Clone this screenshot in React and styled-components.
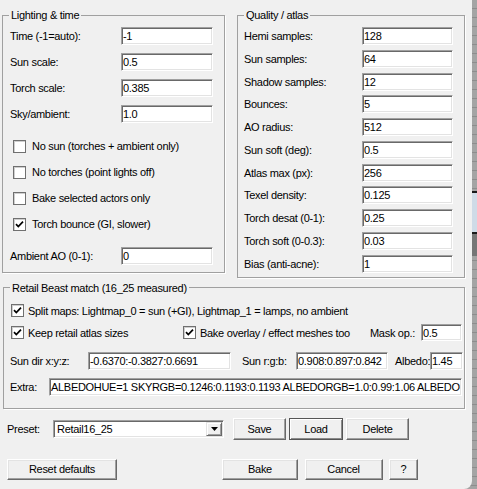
import React from 'react';
import styled, { createGlobalStyle, css } from 'styled-components';

const GlobalStyle = createGlobalStyle`
  html, body {
    margin: 0;
    padding: 0;
  }
  body {
    height: 489px;
    overflow: hidden;
    font-family: "Liberation Sans", Arial, sans-serif;
    font-size: 11px;
    letter-spacing: -0.3px;
    color: #000;
    background:
      linear-gradient(to bottom,
        transparent 191px, #1a1a1a 191px, #1a1a1a 193px,
        #cfdbe7 193px, #cfdbe7 232px, #1a1a1a 232px, #1a1a1a 234px,
        #767676 234px, #767676 256px, transparent 256px),
      repeating-linear-gradient(to bottom, #a4a4a4 0 8px, #8d8d8d 8px 9px);
  }
`;

const Dialog = styled.div`
  width: 472px;
  height: 489px;
  box-sizing: border-box;
  padding: 8px 0 0 2px;
  background: #f0f0f0;
  border-bottom-right-radius: 8px;
`;

const TopRow = styled.div`
  display: flex;
  align-items: flex-start;
  gap: 12px;
`;

const Group = styled.fieldset`
  margin: ${p => p.$margin || 0};
  padding: 0;
  min-width: 0;
  box-sizing: border-box;
  width: ${p => p.$width}px;
  border: 1px solid #a0a0a0;
  box-shadow: 1px 1px 0 #fff;
`;

const Legend = styled.legend`
  margin-left: 6px;
  padding: 0 2px;
  height: 14px;
  line-height: 14px;
`;

const GroupBody = styled.div`
  display: flex;
  flex-direction: column;
  gap: ${p => p.$gap}px;
  padding: ${p => p.$pad};
`;

const Field = styled.div`
  display: grid;
  grid-template-columns: ${p => p.$label}px auto;
  align-items: center;
  height: 18px;
  margin-top: ${p => p.$push || 0}px;
`;

const TextBox = styled.input`
  box-sizing: border-box;
  width: ${p => p.$w}px;
  height: ${p => p.$h || 18}px;
  margin: 0;
  padding: 0 1px;
  font: inherit;
  letter-spacing: inherit;
  color: #000;
  background: #fff;
  border: 1px solid;
  border-color: #a0a0a0 #fff #fff #a0a0a0;
  box-shadow: inset 1px 1px 0 #696969, inset -1px -1px 0 #e3e3e3;
  outline: none;
`;

const CheckRow = styled.label`
  display: flex;
  align-items: center;
  gap: ${p => p.$gap || 6}px;
  height: 18px;
  padding-left: ${p => p.$indent || 0}px;
  margin-top: ${p => p.$push || 0}px;
  width: ${p => (p.$w ? `${p.$w}px` : 'auto')};
  flex-shrink: 0;
  white-space: nowrap;
`;

const Box = styled.span`
  box-sizing: border-box;
  width: 13px;
  height: 13px;
  flex-shrink: 0;
  display: flex;
  align-items: center;
  justify-content: center;
  background: #fff;
  border: 1px solid #707070;
  box-shadow: inset 1px 1px 0 #cfcfcf;
`;

const Row = styled.div`
  display: flex;
  align-items: center;
  height: 18px;
  margin-top: ${p => p.$push || 0}px;
`;

const Caption = styled.span`
  width: ${p => p.$w}px;
  flex-shrink: 0;
  white-space: nowrap;
  margin-left: ${p => p.$lead || 0}px;
`;

const Combo = styled.div`
  box-sizing: border-box;
  width: 171px;
  height: 18px;
  display: flex;
  align-items: center;
  background: #fff;
  border: 1px solid;
  border-color: #a0a0a0 #fff #fff #a0a0a0;
  box-shadow: inset 1px 1px 0 #696969, inset -1px -1px 0 #e3e3e3;
  padding: 1px 1px 1px 2px;
`;

const ComboText = styled.span`
  flex: 1;
  padding-left: 1px;
`;

const ComboArrow = styled.span`
  box-sizing: border-box;
  width: 16px;
  height: 14px;
  display: flex;
  align-items: center;
  justify-content: center;
  background: #f0f0f0;
  border: 1px solid;
  border-color: #e3e3e3 #696969 #696969 #e3e3e3;
  box-shadow: inset 1px 1px 0 #fff, inset -1px -1px 0 #a0a0a0;
`;

const ButtonRow = styled.div`
  display: flex;
  align-items: center;
  padding-left: 5px;
  margin-top: ${p => p.$push}px;
  height: ${p => p.$h}px;
`;

const ButtonGroup = styled.div`
  display: flex;
  gap: ${p => p.$gap}px;
  margin-left: ${p => p.$offset}px;
`;

const Button = styled.button`
  box-sizing: border-box;
  width: ${p => p.$w}px;
  height: ${p => p.$h || 22}px;
  margin: 0;
  padding: 0;
  font: inherit;
  letter-spacing: inherit;
  color: #000;
  background: #f0f0f0;
  border: 1px solid;
  border-color: #fff #696969 #696969 #fff;
  box-shadow: inset -1px -1px 0 #a0a0a0, inset 1px 1px 0 #e3e3e3;
  ${p => p.$default && css`
    border-color: #555;
    box-shadow: inset 1px 1px 0 #fff, inset -1px -1px 0 #8a8a8a;
  `}
`;

function Check({ checked, children, ...rest }) {
  return (
    <CheckRow {...rest}>
      <Box>
        {checked && (
          <svg width="9" height="9" viewBox="0 0 9 9">
            <path d="M1 4.2 L3.3 6.6 L8 1.6" fill="none" stroke="#000" strokeWidth="1.7" />
          </svg>
        )}
      </Box>
      <span>{children}</span>
    </CheckRow>
  );
}

const lighting = [
  ['Time (-1=auto):', '-1'],
  ['Sun scale:', '0.5'],
  ['Torch scale:', '0.385'],
  ['Sky/ambient:', '1.0'],
];

const quality = [
  ['Hemi samples:', '128'],
  ['Sun samples:', '64'],
  ['Shadow samples:', '12'],
  ['Bounces:', '5'],
  ['AO radius:', '512'],
  ['Sun soft (deg):', '0.5'],
  ['Atlas max (px):', '256'],
  ['Texel density:', '0.125'],
  ['Torch desat (0-1):', '0.25'],
  ['Torch soft (0-0.3):', '0.03'],
  ['Bias (anti-acne):', '1'],
];

const extra =
  'ALBEDOHUE=1 SKYRGB=0.1246:0.1193:0.1193 ALBEDORGB=1.0:0.99:1.06 ALBEDO=1.45 SUNRGB=0.908:0.897:0.842';

export default function App() {
  return (
    <>
      <GlobalStyle />
      <Dialog>
        <TopRow>
          <Group $width={223}>
            <Legend>Lighting &amp; time</Legend>
            <GroupBody $gap={8} $pad="5px 11px 7px 7px">
              {lighting.map(([label, value]) => (
                <Field key={label} $label={111}>
                  <span>{label}</span>
                  <TextBox $w={92} defaultValue={value} />
                </Field>
              ))}
              <Check $indent={3} $push={6}>No sun (torches + ambient only)</Check>
              <Check $indent={3}>No torches (point lights off)</Check>
              <Check $indent={3}>Bake selected actors only</Check>
              <Check $indent={3} checked>Torch bounce (GI, slower)</Check>
              <Field $label={111} $push={6}>
                <span>Ambient AO (0-1):</span>
                <TextBox $w={92} defaultValue="0" />
              </Field>
            </GroupBody>
          </Group>

          <Group $width={228}>
            <Legend>Quality / atlas</Legend>
            <GroupBody $gap={4.75} $pad="5px 11px 4px 6px">
              {quality.map(([label, value]) => (
                <Field key={label} $label={118}>
                  <span>{label}</span>
                  <TextBox $w={91} defaultValue={value} />
                </Field>
              ))}
            </GroupBody>
          </Group>
        </TopRow>

        <Group $width={462} $margin="3px 0 0 1px">
          <Legend>Retail Beast match (16_25 measured)</Legend>
          <GroupBody $gap={0} $pad="7px 0 12px 7px">
            <Check $gap={4} checked>
              Split maps: Lightmap_0 = sun (+GI), Lightmap_1 = lamps, no ambient
            </Check>
            <Row $push={4}>
              <Check $gap={4} $w={172} checked>Keep retail atlas sizes</Check>
              <Check $gap={4} $w={187} checked>Bake overlay / effect meshes too</Check>
              <Caption $w={51}>Mask op.:</Caption>
              <TextBox $w={41} $h={17} defaultValue="0.5" />
            </Row>
            <Row $push={10}>
              <Caption $w={78} $lead={-1}>Sun dir x:y:z:</Caption>
              <TextBox $w={143} defaultValue="-0.6370:-0.3827:0.6691" />
              <Caption $w={54} $lead={11}>Sun r:g:b:</Caption>
              <TextBox $w={92} defaultValue="0.908:0.897:0.842" />
              <Caption $w={35} $lead={7}>Albedo:</Caption>
              <TextBox $w={33} defaultValue="1.45" />
            </Row>
            <Row $push={8}>
              <Caption $w={39} $lead={-1}>Extra:</Caption>
              <TextBox $w={413} defaultValue={extra} />
            </Row>
          </GroupBody>
        </Group>

        <ButtonRow $push={9} $h={22}>
          <Caption $w={46}>Preset:</Caption>
          <Combo>
            <ComboText>Retail16_25</ComboText>
            <ComboArrow>
              <svg width="7" height="4" viewBox="0 0 7 4">
                <path d="M0 0 H7 L3.5 4 Z" fill="#000" />
              </svg>
            </ComboArrow>
          </Combo>
          <ButtonGroup $gap={3} $offset={9}>
            <Button $w={53}>Save</Button>
            <Button $w={54} $default>Load</Button>
            <Button $w={63}>Delete</Button>
          </ButtonGroup>
        </ButtonRow>

        <ButtonRow $push={19} $h={21}>
          <Button $w={110} $h={21}>Reset defaults</Button>
          <ButtonGroup $gap={6.5} $offset={105}>
            <Button $w={76} $h={21}>Bake</Button>
            <Button $w={78} $h={21}>Cancel</Button>
            <Button $w={29} $h={21}>?</Button>
          </ButtonGroup>
        </ButtonRow>
      </Dialog>
    </>
  );
}
